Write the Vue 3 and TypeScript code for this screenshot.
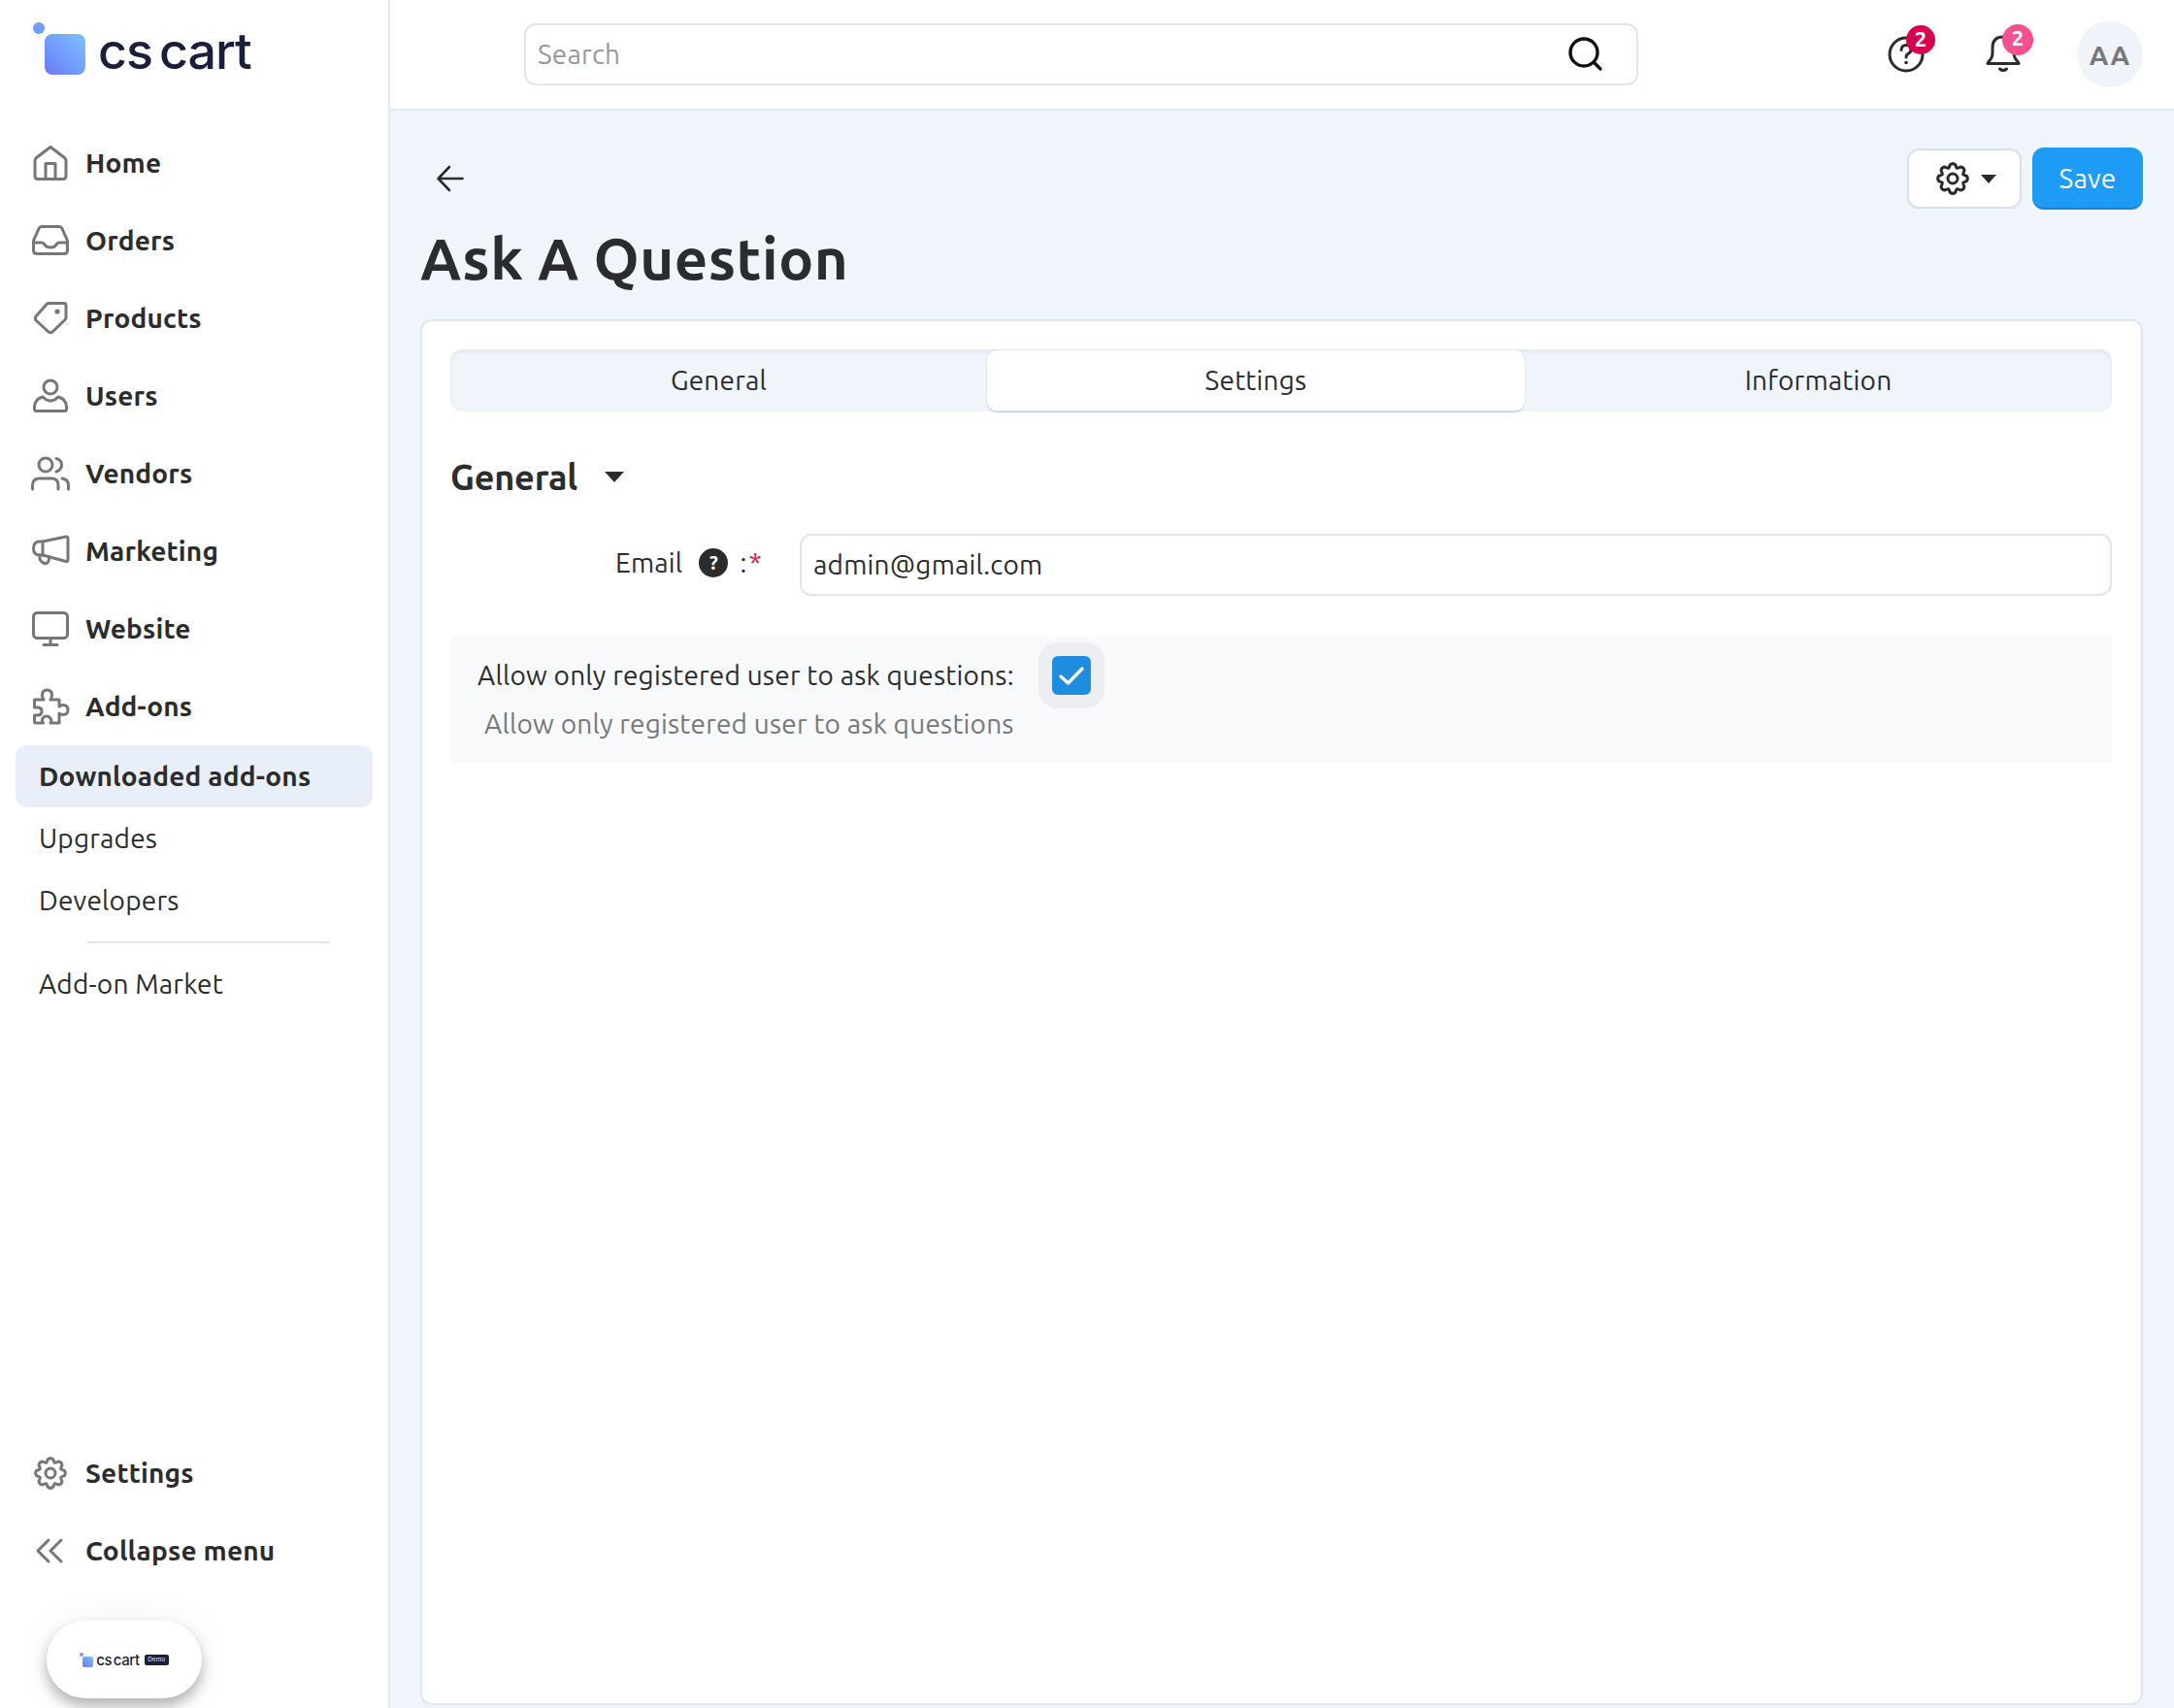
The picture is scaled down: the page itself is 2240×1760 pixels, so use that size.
<script setup lang="ts">
interface NavItem { label: string; icon: string }

const mainNav: NavItem[] = [
  { label: 'Home', icon: 'home' },
  { label: 'Orders', icon: 'orders' },
  { label: 'Products', icon: 'tag' },
  { label: 'Users', icon: 'user' },
  { label: 'Vendors', icon: 'vendors' },
  { label: 'Marketing', icon: 'marketing' },
  { label: 'Website', icon: 'website' },
  { label: 'Add-ons', icon: 'puzzle' },
]

const tabs = ['General', 'Settings', 'Information']

function makeGear(cx: number, cy: number, ro: number, ri: number, teeth: number): string {
  const pts: string[] = []
  const step = (Math.PI * 2) / teeth
  for (let i = 0; i < teeth; i++) {
    const a = i * step - Math.PI / 2
    const p = (r: number, off: number) =>
      `${(cx + r * Math.cos(a + off)).toFixed(2)} ${(cy + r * Math.sin(a + off)).toFixed(2)}`
    pts.push(`${i === 0 ? 'M' : 'L'}${p(ri, -step * 0.5)}`)
    pts.push(`Q${p(ri + 1, -step * 0.34)} ${p(ro - 1, -step * 0.24)}`)
    pts.push(`Q${p(ro + 1, 0)} ${p(ro - 1, step * 0.24)}`)
    pts.push(`Q${p(ri + 1, step * 0.34)} ${p(ri, step * 0.5)}`)
  }
  return pts.join(' ') + ' Z'
}
const gearPath = makeGear(20, 20, 15.5, 11.5, 8)
</script>

<template>
  <div class="app">
    <aside class="sidebar">
      <div class="logo">
        <span class="logo-dot"></span>
        <span class="logo-square"></span>
        <span class="logo-text">cs cart</span>
      </div>

      <nav class="nav">
        <a v-for="item in mainNav" :key="item.label" class="nav-item">
          <svg class="nav-icon" viewBox="0 0 40 40">
            <template v-if="item.icon === 'home'">
              <path d="M20 3.5 L34.5 14.5 Q36 16 36 18 V33 Q36 36.5 33 36.5 H7 Q4 36.5 4 33 V18 Q4 16 5.5 14.5 Z" />
              <path d="M15 36.5 V20.5 H25 V36.5" />
            </template>
            <template v-else-if="item.icon === 'orders'">
              <path d="M11 5.5 H29 Q31 5.5 32 7.5 L37.5 20 V30 Q37.5 33.5 34 33.5 H6 Q2.5 33.5 2.5 30 V20 L8 7.5 Q9 5.5 11 5.5 Z" />
              <path d="M2.5 22 H11 Q13 22 14 24 Q15.5 27 20 27 Q24.5 27 26 24 Q27 22 29 22 H37.5" />
            </template>
            <template v-else-if="item.icon === 'tag'">
              <path d="M18 4.5 H34 Q36 4.5 36 6.5 V19 Q36 20.5 35 21.5 L22 34 Q20 35.5 18 34 L5 22 Q3.5 20 5 18 L16.5 5 Q17 4.5 18 4.5 Z" />
              <circle class="filled" cx="27" cy="13" r="2.6" />
            </template>
            <template v-else-if="item.icon === 'user'">
              <circle cx="20" cy="11" r="7" />
              <path d="M12 21 Q4 23 3.5 31 V33.5 Q3.5 35.5 5.5 35.5 H34.5 Q36.5 35.5 36.5 33.5 V31 Q36 23 28 21 Q24 25 20 25 Q16 25 12 21 Z" />
            </template>
            <template v-else-if="item.icon === 'vendors'">
              <circle cx="15" cy="11" r="7" />
              <path d="M26 4.5 Q31.5 6 31.5 11 Q31.5 16 26 18" />
              <path d="M1.5 36 V32 Q1.5 25 9 25 H21 Q28 25 28 32 V36" />
              <path d="M32 25 Q38.5 26 38.5 32 V36" />
            </template>
            <template v-else-if="item.icon === 'marketing'">
              <path d="M36 5 Q38 4.5 38 7 V29 Q38 31 36 30.5 L12 24 H9 Q2.5 24 2.5 17 Q2.5 10 9 10 H12 Z" />
              <path d="M12 10 V24" />
              <path d="M9 24 Q8 31 14 32.5 Q18 33.5 19 26" />
            </template>
            <template v-else-if="item.icon === 'website'">
              <rect x="2.5" y="3.5" width="35" height="26" rx="4" />
              <path d="M20 29.5 V36 M13 36.5 H27" />
            </template>
            <template v-else>
              <path d="M3.5 13 H13 Q11.5 11 11.5 8 Q11.5 3 16.5 3 Q21.5 3 21.5 8 Q21.5 11 20 13 H29 V20 Q31 18.5 33 18.5 Q38 18.5 38 23.5 Q38 28.5 33 28.5 Q31 28.5 29 27 V37 H20 Q21.5 35 20.5 33 Q19 30 16 30 Q13 30 11.5 33 Q11 35 12.5 37 H5 Q3.5 37 3.5 35.5 V29 H7 Q11 29 11 25 Q11 21 7 21 H3.5 Z" />
            </template>
          </svg>
          <span>{{ item.label }}</span>
        </a>
      </nav>

      <div class="subnav">
        <a class="sub-item active">Downloaded add-ons</a>
        <a class="sub-item">Upgrades</a>
        <a class="sub-item">Developers</a>
        <div class="sub-divider"></div>
        <a class="sub-item">Add-on Market</a>
      </div>

      <div class="sidebar-bottom">
        <a class="nav-item">
          <svg class="nav-icon" viewBox="0 0 40 40">
            <path :d="gearPath" />
            <circle cx="20" cy="20" r="5" />
          </svg>
          <span>Settings</span>
        </a>
        <a class="nav-item">
          <svg class="nav-icon" viewBox="0 0 40 40">
            <path d="M18 9 L7 20 L18 31 M31 9 L20 20 L31 31" />
          </svg>
          <span>Collapse menu</span>
        </a>
        <div class="demo-pill">
          <span class="mini-logo">
            <span class="mini-dot"></span>
            <span class="mini-square"></span>
          </span>
          <span class="mini-text">cs cart</span>
          <span class="mini-badge">Demo</span>
        </div>
      </div>
    </aside>

    <main class="main">
      <header class="topbar">
        <div class="search">
          <span class="search-placeholder">Search</span>
          <svg class="search-icon" viewBox="0 0 40 40">
            <circle cx="18" cy="18" r="14" />
            <path d="M28 28 L35 35" />
          </svg>
        </div>
        <div class="top-actions">
          <div class="top-icon help">
            <svg viewBox="0 0 40 40">
              <circle cx="20" cy="20" r="17" />
              <path d="M15 15.5 Q15.5 10.5 20 10.5 Q25 10.5 25 15 Q25 18 22 19.5 Q20 20.5 20 23" />
              <circle class="dot" cx="20" cy="28.5" r="1.8" />
            </svg>
            <span class="badge badge-red">2</span>
          </div>
          <div class="top-icon bell">
            <svg viewBox="0 0 40 40">
              <path d="M4 29.5 Q4 28.5 5 27.5 Q9 24 9 18 V13 Q9 2 20 2 Q31 2 31 13 V18 Q31 24 35 27.5 Q36 28.5 36 29.5 Z" />
              <path d="M16.5 35 Q20 38 23.5 35" />
            </svg>
            <span class="badge badge-pink">2</span>
          </div>
          <div class="avatar">AA</div>
        </div>
      </header>

      <section class="content">
        <div class="toolbar">
          <svg class="back" viewBox="0 0 30 30">
            <path d="M27.5 15 H3 M14 3 L2.5 15 L14 27" />
          </svg>
          <div class="toolbar-actions">
            <button class="btn-gear" type="button">
              <svg viewBox="0 0 40 40">
                <path :d="gearPath" />
                <circle cx="20" cy="20" r="5" />
              </svg>
              <span class="caret small"></span>
            </button>
            <button class="btn-save" type="button">Save</button>
          </div>
        </div>

        <h1 class="title">Ask A Question</h1>

        <div class="card">
          <div class="tabs">
            <div v-for="tab in tabs" :key="tab" class="tab" :class="{ active: tab === 'Settings' }">{{ tab }}</div>
          </div>

          <div class="section-head">
            <h2>General</h2>
            <span class="caret"></span>
          </div>

          <div class="field">
            <div class="field-label">
              <span>Email</span>
              <span class="help-dot">?</span>
              <span class="colon">:</span><span class="req">*</span>
            </div>
            <div class="field-input">admin@gmail.com</div>
          </div>

          <div class="option">
            <div class="option-text">
              <div class="option-label">Allow only registered user to ask questions:</div>
              <div class="option-desc">Allow only registered user to ask questions</div>
            </div>
            <div class="check-halo">
              <span class="check">
                <svg viewBox="0 0 40 40"><path d="M9 21 L16.5 28 L31 13" /></svg>
              </span>
            </div>
          </div>
        </div>
      </section>
    </main>
  </div>
</template>

<style scoped>
.app {
  width: 2240px;
  height: 1760px;
  display: flex;
  overflow: hidden;
  background: #f0f4fb;
  color: #2b2c2e;
  font-family: "Ubuntu", "Noto Sans", "Open Sans", sans-serif;
  font-size: 28px;
  letter-spacing: 0.2px;
}

.sidebar {
  width: 402px;
  flex: none;
  box-sizing: border-box;
  background: #fff;
  border-right: 2px solid #e3e9f4;
  display: flex;
  flex-direction: column;
}

.logo {
  height: 128px;
  position: relative;
  display: flex;
  align-items: flex-start;
  flex: none;
}
.logo-dot {
  position: absolute;
  left: 34px;
  top: 23px;
  width: 12px;
  height: 12px;
  border-radius: 50%;
  background: #6f9bff;
}
.logo-square {
  margin: 35px 0 0 46px;
  width: 42px;
  height: 42px;
  border-radius: 8px;
  background: linear-gradient(45deg, #6a78fb, #7cc4ff);
}
.logo-text {
  margin: 22px 0 0 13px;
  font-family: "Inter", sans-serif;
  font-size: 52px;
  line-height: 62px;
  font-weight: 500;
  letter-spacing: -1px;
  word-spacing: -6px;
  color: #1b1f3b;
}

.nav {
  display: flex;
  flex-direction: column;
}
.nav-item {
  height: 80px;
  display: flex;
  align-items: center;
  gap: 16px;
  padding-left: 32px;
  font-weight: 700;
}
.nav-item span {
  margin-top: -1px;
}
.nav-icon {
  width: 40px;
  height: 40px;
  flex: none;
  fill: none;
  stroke: #767779;
  stroke-width: 3;
  stroke-linecap: round;
  stroke-linejoin: round;
}
.nav-icon .filled {
  fill: #767779;
  stroke: none;
}

.subnav {
  display: flex;
  flex-direction: column;
}
.sub-item {
  height: 64px;
  margin: 0 16px;
  padding: 0 0 1px 24px;
  box-sizing: border-box;
  display: flex;
  align-items: center;
  border-radius: 12px;
}
.sub-item.active {
  background: #e9eff8;
  font-weight: 700;
}
.sub-divider {
  height: 2px;
  margin: 10px 60px 10px 90px;
  background: #dfe6f1;
}

.sidebar-bottom {
  margin-top: auto;
  padding-bottom: 10px;
  display: flex;
  flex-direction: column;
}

.demo-pill {
  margin: 32px 0 0 48px;
  width: 160px;
  height: 80px;
  border-radius: 40px;
  background: #fff;
  box-shadow: 0 8px 14px rgba(0, 0, 0, 0.28), 0 0 40px rgba(0, 0, 0, 0.06);
  display: flex;
  align-items: center;
  justify-content: center;
  gap: 3px;
  box-sizing: border-box;
}
.mini-logo {
  position: relative;
  width: 14px;
  height: 14px;
  flex: none;
}
.mini-dot {
  position: absolute;
  left: 0;
  top: 0;
  width: 4px;
  height: 4px;
  border-radius: 50%;
  background: #6f9bff;
}
.mini-square {
  position: absolute;
  right: 0;
  bottom: -1px;
  width: 11px;
  height: 11px;
  border-radius: 2px;
  background: linear-gradient(45deg, #6a78fb, #7cc4ff);
}
.mini-text {
  font-family: "Inter", sans-serif;
  font-size: 15px;
  font-weight: 500;
  letter-spacing: -0.4px;
  word-spacing: -2px;
  color: #1b1f3b;
}
.mini-badge {
  margin-left: 2px;
  width: 25px;
  height: 11px;
  border-radius: 2px;
  background: #1b1f3b;
  color: #dfe4f5;
  font-family: "Inter", sans-serif;
  font-size: 6.5px;
  letter-spacing: 0;
  line-height: 11px;
  text-align: center;
}

.main {
  flex: 1;
  min-width: 0;
  display: flex;
  flex-direction: column;
}

.topbar {
  height: 114px;
  flex: none;
  box-sizing: border-box;
  background: #fff;
  border-bottom: 2px solid #e6ebf3;
  display: flex;
  align-items: flex-start;
  padding: 24px 32px 0 138px;
}
.search {
  width: 1148px;
  height: 64px;
  box-sizing: border-box;
  border: 2px solid #dfe6f1;
  border-radius: 12px;
  display: flex;
  align-items: center;
  justify-content: space-between;
  padding: 0 32px 0 12px;
}
.search-placeholder {
  color: #97989a;
  margin-top: -1px;
}
.search-icon {
  width: 40px;
  height: 40px;
  fill: none;
  stroke: #111;
  stroke-width: 3.4;
  stroke-linecap: round;
}

.top-actions {
  margin-left: auto;
  display: flex;
  align-items: center;
  height: 68px;
  margin-top: -2px;
}
.top-icon {
  position: relative;
  width: 40px;
  height: 40px;
}
.top-icon svg {
  width: 40px;
  height: 40px;
  fill: none;
  stroke: #2b2c2e;
  stroke-width: 3;
  stroke-linecap: round;
  stroke-linejoin: round;
}
.top-icon .dot {
  fill: #2b2c2e;
  stroke: none;
}
.top-icon.bell {
  margin-left: 60px;
}
.badge {
  position: absolute;
  top: -10px;
  height: 30px;
  border-radius: 50%;
  color: #fff;
  font-size: 22px;
  font-weight: 700;
  letter-spacing: 0;
  line-height: 27px;
  text-align: center;
}
.badge-red {
  left: 20px;
  width: 30px;
  background: #d6044f;
}
.badge-pink {
  left: 19px;
  top: -11px;
  width: 32px;
  height: 32px;
  background: #f5508f;
}
.avatar {
  margin-left: 56px;
  width: 68px;
  height: 68px;
  border-radius: 50%;
  background: #f0f4fa;
  color: #77787a;
  font-weight: 700;
  letter-spacing: 1px;
  display: flex;
  align-items: center;
  justify-content: center;
}

.content {
  flex: 1;
  min-height: 0;
  padding: 0 32px 0 31px;
  display: flex;
  flex-direction: column;
}
.toolbar {
  height: 64px;
  margin-top: 38px;
  flex: none;
  display: flex;
  align-items: center;
  justify-content: space-between;
}
.back {
  width: 30px;
  height: 30px;
  margin-left: 16px;
  fill: none;
  stroke: #2b2c2e;
  stroke-width: 2.6;
  stroke-linecap: round;
  stroke-linejoin: round;
}
.toolbar-actions {
  display: flex;
  gap: 11px;
  align-items: center;
}
.btn-gear {
  width: 118px;
  height: 62px;
  box-sizing: border-box;
  background: #fff;
  border: 2px solid #d8e0ee;
  border-radius: 12px;
  display: flex;
  align-items: center;
  justify-content: center;
  gap: 9px;
  padding: 0;
}
.btn-gear svg {
  width: 40px;
  height: 40px;
  fill: none;
  stroke: #2b2c2e;
  stroke-width: 3;
  stroke-linejoin: round;
}
.btn-save {
  width: 114px;
  height: 64px;
  box-sizing: border-box;
  border: none;
  border-bottom: 2px solid #1583d6;
  border-radius: 12px;
  background: #1e9bf5;
  color: #fff;
  font: inherit;
  letter-spacing: inherit;
  padding: 0;
}
.caret {
  width: 0;
  height: 0;
  border-left: 10px solid transparent;
  border-right: 10px solid transparent;
  border-top: 11px solid #2b2c2e;
}
.caret.small {
  border-left-width: 8px;
  border-right-width: 8px;
  border-top-width: 9px;
}

.title {
  margin: 15px 0 0;
  height: 65px;
  flex: none;
  font-size: 60px;
  line-height: 70px;
  font-weight: 700;
  letter-spacing: 0.5px;
}

.card {
  margin-top: 33px;
  flex: 1;
  min-height: 0;
  margin-bottom: 3px;
  box-sizing: border-box;
  background: #fff;
  border: 2px solid #e0e7f3;
  border-radius: 12px;
  padding: 29px 30px 0 29px;
}

.tabs {
  display: grid;
  grid-template-columns: 553px 554px 1fr;
  height: 64px;
  border-radius: 12px;
  background: #f0f4fb;
  box-shadow: inset 0 3px 4px rgba(40, 50, 80, 0.06);
}
.tab {
  display: flex;
  align-items: center;
  justify-content: center;
  padding-bottom: 2px;
  box-sizing: border-box;
}
.tab.active {
  margin: 1px 0;
  background: #fff;
  border-radius: 10px;
  box-shadow: 0 0 0 1px #e0e7f3, 0 2px 1px #b9c6de;
}

.section-head {
  margin-top: 43px;
  height: 48px;
  display: flex;
  align-items: center;
  gap: 28px;
}
.section-head h2 {
  margin: 0;
  font-size: 36px;
  font-weight: 700;
  letter-spacing: -0.2px;
}

.field {
  margin-top: 35px;
  display: flex;
  align-items: center;
}
.field-label {
  width: 360px;
  flex: none;
  box-sizing: border-box;
  padding-left: 170px;
  display: flex;
  align-items: center;
  margin-top: -5px;
}
.help-dot {
  margin-left: 17px;
  width: 30px;
  height: 30px;
  flex: none;
  border-radius: 50%;
  background: #2b2c2e;
  color: #fff;
  font-size: 20px;
  font-weight: 700;
  line-height: 30px;
  text-align: center;
}
.colon {
  margin-left: 12px;
}
.req {
  color: #d6204f;
  margin-left: 2px;
}
.field-input {
  flex: 1;
  height: 64px;
  box-sizing: border-box;
  border: 2px solid #dfe6f1;
  border-radius: 12px;
  padding: 0 12px 2px;
  display: flex;
  align-items: center;
}

.option {
  margin-top: 42px;
  height: 130px;
  background: #f8f9fb;
  display: flex;
  padding: 6px 0 0 28px;
  box-sizing: border-box;
}
.option-text {
  display: flex;
  flex-direction: column;
  align-items: flex-end;
}
.option-label {
  height: 50px;
  display: flex;
  align-items: center;
  margin-top: 8px;
}
.option-desc {
  height: 50px;
  margin-top: 0;
  display: flex;
  align-items: center;
  color: #77787a;
}
.check-halo {
  margin-left: 25px;
  width: 68px;
  height: 68px;
  border-radius: 20px;
  background: #eceef1;
  display: flex;
  align-items: center;
  justify-content: center;
}
.check {
  width: 40px;
  height: 40px;
  border-radius: 6px;
  background: #1e8de0;
  display: block;
}
.check svg {
  width: 40px;
  height: 40px;
  display: block;
  fill: none;
  stroke: #fff;
  stroke-width: 3.4;
  stroke-linecap: round;
  stroke-linejoin: round;
}
</style>
